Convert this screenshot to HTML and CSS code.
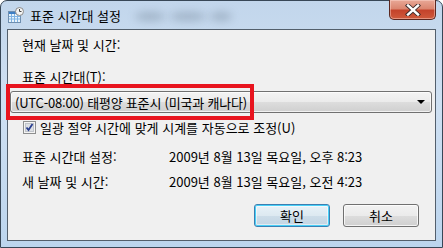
FILE: index.html
```html
<!DOCTYPE html>
<html lang="ko">
<head>
    <meta charset="UTF-8">
    <title>표준 시간대 설정</title>
    <link rel="stylesheet" href="styles.css">
</head>

<body>
    <div class="window">
        <div class="titlebar">
            <svg class="app-icon" width="16" height="16" viewBox="0 0 16 16">
                <rect x="0.5" y="4.5" width="12" height="11" fill="#e9f3fb" stroke="#6f8fb0"/>
                <rect x="1" y="5" width="11" height="2" fill="#3f7fc4"/>
                <path d="M1 9.5h11M1 12h11M3.5 7v8M6.5 7v8M9.5 7v8" stroke="#7fb3e3" stroke-width="1"/>
                <circle cx="11.5" cy="4.5" r="4" fill="#f4f4f4" stroke="#8a8a8a"/>
                <path d="M11.5 2v2.5h2" stroke="#444" stroke-width="1" fill="none"/>
            </svg>
            <span class="title">표준 시간대 설정</span>
            <span class="blur blur-a"></span>
            <span class="blur blur-b"></span>
            <span class="blur blur-c"></span>
            <div class="close">
                <svg width="16" height="12" viewBox="0 0 16 12">
                    <path d="M3 1.5l10 9M13 1.5l-10 9" stroke="#3b2a2a" stroke-width="4.2" stroke-linecap="square"/>
                    <path d="M3 1.5l10 9M13 1.5l-10 9" stroke="#ffffff" stroke-width="2.4" stroke-linecap="square"/>
                </svg>
            </div>
        </div>

        <div class="client">
            <div class="label now">현재 날짜 및 시간:</div>
            <div class="label zone">표준 시간대(T):</div>
            <div class="combo">
                <span class="combo-text">(UTC-08:00) 태평양 표준시 (미국과 캐나다)</span>
                <span class="arrow"></span>
            </div>
            <div class="check-row">
                <svg class="check" width="13" height="13" viewBox="0 0 13 13">
                    <rect x="0.5" y="0.5" width="12" height="12" fill="#f4f4f4" stroke="#8e8f8f"/>
                    <rect x="2.5" y="2.5" width="8" height="8" fill="#dcdfe4" stroke="#c0c4ca"/>
                    <path d="M3.5 6.5l2 2.5 4-6" stroke="#2a3f8f" stroke-width="1.8" fill="none"/>
                </svg>
                <span>일광 절약 시간에 맞게 시계를 자동으로 조정(U)</span>
            </div>
            <div class="info first">
                <span class="info-key">표준 시간대 설정:</span>
                <span>2009년 8월 13일 목요일, 오후 8:23</span>
            </div>
            <div class="info">
                <span class="info-key">새 날짜 및 시간:</span>
                <span>2009년 8월 13일 목요일, 오전 4:23</span>
            </div>
            <div class="buttons">
                <div class="btn default">확인</div>
                <div class="btn">취소</div>
            </div>
        </div>

        <div class="highlight"></div>
    </div>
</body>

</html>
```

FILE: styles.css
```css
body {
    margin: 0;
    width: 443px;
    height: 248px;
    overflow: hidden;
    background: #fff;
    font-family: "Noto Sans CJK KR", "Liberation Sans", sans-serif;
    font-size: 13px;
    color: #000;
}

.window {
    position: relative;
    box-sizing: border-box;
    width: 443px;
    height: 248px;
    padding: 0 6px 6px;
    border: 1px solid #384757;
    border-radius: 7px 7px 0 0;
    background: linear-gradient(to bottom, #c2d6ec 0%, #cfe0f2 40%, #bcd5ee 100%);
}

.titlebar {
    position: relative;
    display: flex;
    align-items: flex-start;
    height: 28px;
}

.app-icon {
    margin: 6px 0 0 1px;
}

.title {
    margin: 6px 0 0 6px;
    line-height: 18px;
    position: relative;
    z-index: 1;
}

.blur {
    position: absolute;
    border-radius: 50%;
    background: rgba(70, 85, 105, 0.28);
    filter: blur(4px);
}

.blur-a {
    left: 128px;
    top: 11px;
    width: 30px;
    height: 9px;
}

.blur-b {
    left: 163px;
    top: 11px;
    width: 36px;
    height: 9px;
}

.blur-c {
    left: 203px;
    top: 11px;
    width: 22px;
    height: 9px;
}

.close {
    display: flex;
    align-items: center;
    justify-content: center;
    box-sizing: border-box;
    width: 47px;
    height: 20px;
    margin: -1px 0 0 auto;
    border: 1px solid #5b2720;
    border-top: none;
    border-radius: 0 0 5px 5px;
    background: linear-gradient(to bottom, #e8a897 0%, #db8670 45%, #c4432b 55%, #cf5a3c 100%);
    box-shadow: inset 0 0 0 1px rgba(255, 220, 210, 0.45);
}

.client {
    box-sizing: border-box;
    height: 212px;
    border: 1px solid #535f6c;
    background: #f0f0f0;
    padding: 0 0 0 14px;
}

.label {
    height: 20px;
    line-height: 20px;
}

.now {
    margin-top: 5px;
}

.zone {
    margin-top: 12px;
}

.combo {
    display: flex;
    align-items: center;
    box-sizing: border-box;
    height: 22px;
    margin: 4px 3px 0 -12px;
    padding: 0 6px 0 4px;
    border: 1px solid #707070;
    border-radius: 3px;
    background: linear-gradient(to bottom, #f3f3f3 0%, #ebebeb 50%, #dddddd 51%, #cfcfcf 100%);
    box-shadow: inset 0 0 0 1px rgba(255, 255, 255, 0.7);
}

.combo-text {
    flex: 1;
    letter-spacing: -0.2px;
}

.arrow {
    width: 0;
    height: 0;
    border-left: 4px solid transparent;
    border-right: 4px solid transparent;
    border-top: 4px solid #000;
}

.check-row {
    display: flex;
    align-items: center;
    height: 13px;
    margin-top: 8px;
    padding-left: 1px;
}

.check {
    margin-right: 4px;
}

.info {
    display: flex;
    height: 20px;
    line-height: 20px;
    margin-top: 5px;
}

.info.first {
    margin-top: 13px;
}

.info-key {
    width: 147px;
}

.buttons {
    display: flex;
    justify-content: flex-end;
    gap: 13px;
    margin: 12px 16px 0 0;
}

.btn {
    box-sizing: border-box;
    width: 76px;
    height: 23px;
    line-height: 21px;
    text-align: center;
    border: 1px solid #707070;
    border-radius: 3px;
    background: linear-gradient(to bottom, #f2f2f2 0%, #ebebeb 50%, #dddddd 51%, #cfcfcf 100%);
    box-shadow: inset 0 0 0 1px rgba(255, 255, 255, 0.75);
}

.btn.default {
    border-color: #3c7fb1;
    background: linear-gradient(to bottom, #e8f2f8 0%, #dde9f1 50%, #cddde9 51%, #c3d5e3 100%);
    box-shadow: inset 0 0 0 1px #48d0f8, inset 0 0 0 2px rgba(255, 255, 255, 0.5);
}

.highlight {
    position: absolute;
    left: 5px;
    top: 83px;
    width: 248px;
    height: 36px;
    box-sizing: border-box;
    border: 4px solid #e8141e;
}
```
